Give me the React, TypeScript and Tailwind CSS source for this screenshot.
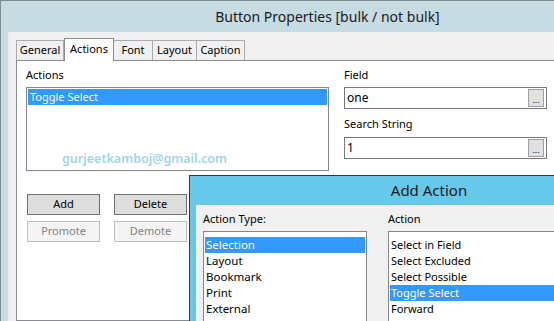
import { FC } from "react";

const tabs = ["General", "Actions", "Font", "Layout", "Caption"];
const tabWidths: Record<string, string> = {
  General: "w-[48px]",
  Actions: "w-[50px]",
  Font: "w-[40px]",
  Layout: "w-[45px]",
  Caption: "w-[49px]",
};

const actionTypes = ["Selection", "Layout", "Bookmark", "Print", "External"];
const actions = ["Select in Field", "Select Excluded", "Select Possible", "Toggle Select", "Forward", "Back"];

const TextBox: FC<{ value: string }> = ({ value }) => (
  <div className="flex h-[22px] items-center border border-[#7a7a7a] bg-white pl-[2px] pr-[2px]">
    <span className="flex-1 text-[12px] leading-none text-black">{value}</span>
    <div className="flex h-[18px] w-[16px] items-end justify-center border border-[#a0a0a0] bg-[#e1e1e1] pb-[2px] text-[9px] leading-none text-black">
      ...
    </div>
  </div>
);

const App: FC = () => {
  return (
    <div className="relative h-[321px] w-[554px] overflow-hidden bg-white font-['Noto_Sans',sans-serif] text-black">
      <div className="flex h-[321px] w-[654px] flex-col border-l border-t border-[#7d8c93] bg-[#c6dbe2]">
        {/* title bar */}
        <div className="flex h-[31px] items-center justify-center text-[14px] text-[#1a1a1a]">
          Button Properties [bulk / not bulk]
        </div>

        <div className="flex flex-1">
          <div className="w-[8px] border-r border-[#e8eef0]" />
          <div className="flex flex-1 flex-col bg-[#f0f0f0] pl-[7px]">
            {/* tabs */}
            <div className="flex h-[28px] items-end pl-px">
              {tabs.map((t) =>
                t === "Actions" ? (
                  <div
                    key={t}
                    className={`${tabWidths[t]} relative z-10 -mb-px flex h-[23px] items-start justify-center border border-b-0 border-[#898c95] bg-white pt-[2px] text-[11px]`}
                  >
                    {t}
                  </div>
                ) : (
                  <div
                    key={t}
                    className={`${tabWidths[t]} -ml-px flex h-[20px] items-center justify-center border border-b-0 border-[#a8abb2] bg-[#f0f0f0] text-[11px]`}
                  >
                    {t}
                  </div>
                )
              )}
            </div>

            {/* panel */}
            <div className="flex flex-1 gap-[15px] border border-[#898c95] bg-white pl-[9px] pt-[7px]">
              <div className="flex w-[303px] flex-col">
                <div className="h-[14px] text-[11px] leading-[14px]">Actions</div>
                <div className="relative mt-[5px] h-[84px] border border-[#828790] bg-white p-px">
                  <div className="flex h-[16px] items-center bg-[#3399ff] pl-[2px] text-[11px] text-white">Toggle Select</div>
                  <div className="absolute left-[35px] top-[62px] text-[12.5px] font-semibold text-[#a3d3ea]">
                    gurjeetkamboj@gmail.com
                  </div>
                </div>
                <div className="ml-px mt-[23px] flex gap-[14px]">
                  <div className="flex h-[21px] w-[73px] items-center justify-center border border-[#707070] bg-[#dddddd] text-[11px]">Add</div>
                  <div className="flex h-[21px] w-[73px] items-center justify-center border border-[#707070] bg-[#dddddd] text-[11px]">Delete</div>
                </div>
                <div className="ml-px mt-[6px] flex gap-[14px]">
                  <div className="flex h-[21px] w-[73px] items-center justify-center border border-[#bfbfbf] bg-[#f4f4f4] text-[11px] text-[#838383]">Promote</div>
                  <div className="flex h-[21px] w-[73px] items-center justify-center border border-[#bfbfbf] bg-[#f4f4f4] text-[11px] text-[#838383]">Demote</div>
                </div>
              </div>

              <div className="flex w-[203px] flex-col">
                <div className="h-[14px] text-[11px] leading-[14px]">Field</div>
                <div className="mt-[5px]">
                  <TextBox value="one" />
                </div>
                <div className="mt-[8px] h-[14px] text-[11px] leading-[14px]">Search String</div>
                <div className="mt-[6px]">
                  <TextBox value="1" />
                </div>
              </div>
            </div>
          </div>
        </div>
      </div>

      {/* Add Action dialog */}
      <div className="absolute left-[189px] top-[175px] flex h-[160px] w-[480px] flex-col border border-[#2f3a3f] bg-[#67c8e9]">
        <div className="flex h-[29px] items-center justify-center text-[15px] text-[#1a1a1a]">Add Action</div>
        <div className="ml-[6px] flex flex-1 gap-[21px] bg-[#f0f0f0] pl-[7px] pt-[6px]">
          <div className="flex w-[164px] flex-col">
            <div className="h-[16px] text-[11px] leading-[16px]">Action Type:</div>
            <div className="mt-[4px] flex-1 border border-[#828790] bg-white px-px pt-[5px]">
              {actionTypes.map((a, i) => (
                <div
                  key={a}
                  className={`flex h-[16px] items-center pl-[1px] text-[11.5px] ${i === 0 ? "bg-[#3399ff] text-white" : ""}`}
                >
                  {a}
                </div>
              ))}
            </div>
          </div>
          <div className="flex flex-1 flex-col">
            <div className="h-[16px] text-[11px] leading-[16px]">Action</div>
            <div className="mt-[4px] flex-1 border border-[#828790] bg-white px-px pt-[5px]">
              {actions.map((a) => (
                <div
                  key={a}
                  className={`flex h-[16px] items-center pl-[1px] text-[11px] ${a === "Toggle Select" ? "bg-[#3399ff] text-white" : ""}`}
                >
                  {a}
                </div>
              ))}
            </div>
          </div>
        </div>
      </div>
    </div>
  );
};

export default App;
